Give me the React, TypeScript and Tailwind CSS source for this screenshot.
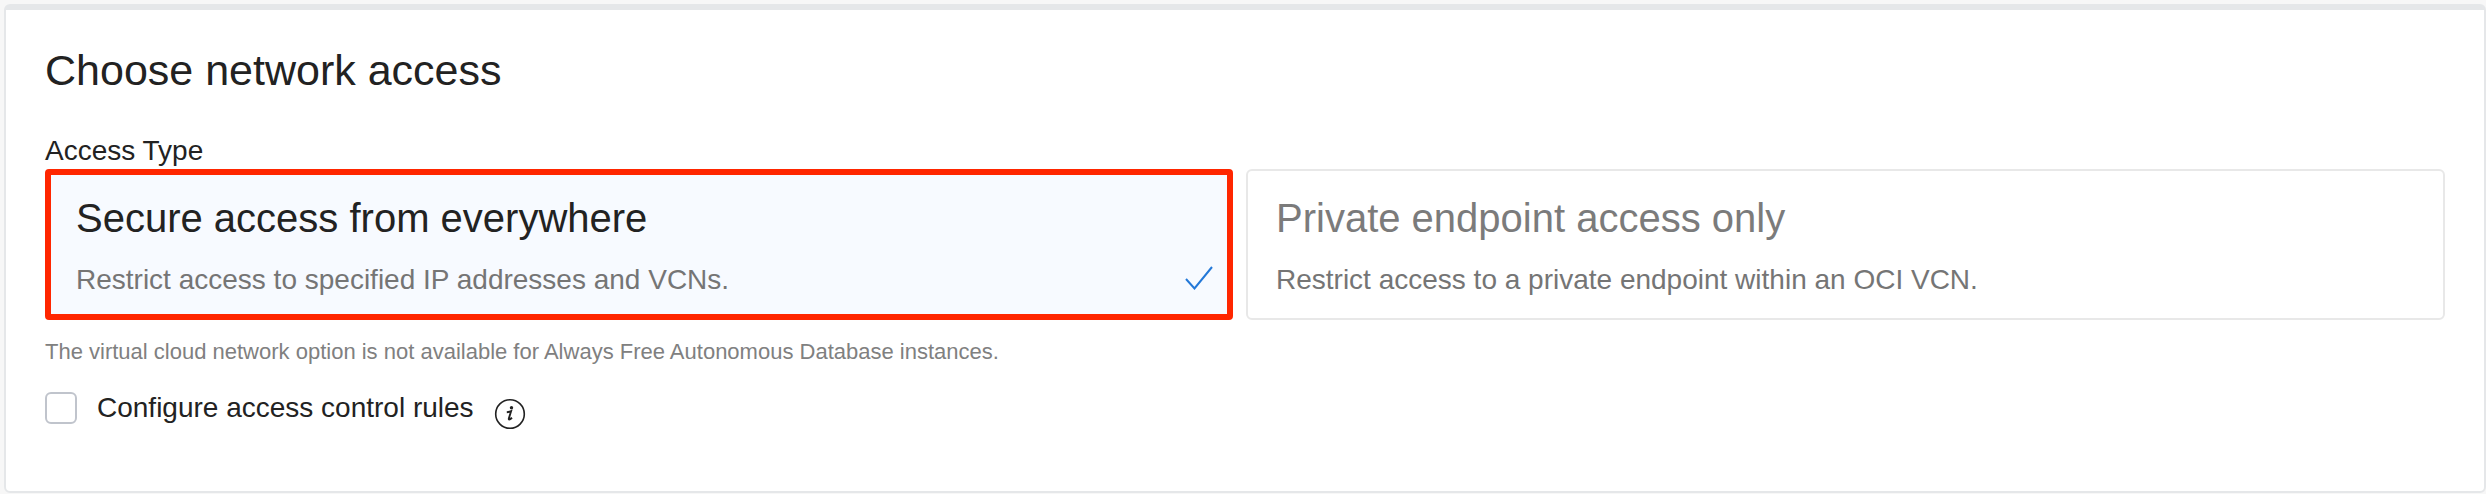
import { useState } from "react";

type Option = { id: string; title: string; description: string };

const options: Option[] = [
  {
    id: "everywhere",
    title: "Secure access from everywhere",
    description: "Restrict access to specified IP addresses and VCNs.",
  },
  {
    id: "private",
    title: "Private endpoint access only",
    description: "Restrict access to a private endpoint within an OCI VCN.",
  },
];

function CheckMark() {
  return (
    <svg viewBox="0 0 28 24" className="h-6 w-7 shrink-0" fill="none" stroke="#2378d8" strokeWidth="2" aria-hidden="true">
      <path d="M1 13 L9.500 22.500 L27 1" />
    </svg>
  );
}

function InfoIcon() {
  return (
    <svg viewBox="0 0 32 32" className="h-8 w-8" aria-hidden="true">
      <circle cx="16" cy="16" r="14.300" fill="none" stroke="#222" strokeWidth="1.600" />
      <circle cx="17.500" cy="9.700" r="1.700" fill="#222" />
      <path
        d="M12.800 14.300 C14.300 14.200 15.600 13.800 17.100 13.200 L14.900 20.300 C14.500 21.800 15.300 22.300 18 19.800"
        fill="none"
        stroke="#222"
        strokeWidth="1.900"
        strokeLinejoin="miter"
      />
    </svg>
  );
}

function AccessCard({ option, selected, onSelect }: { option: Option; selected: boolean; onSelect: () => void }) {
  return (
    <label
      className={
        selected
          ? "flex cursor-pointer items-end justify-between rounded-sm border-[6px] border-[#ff2600] bg-[#f7faff] pt-[19px] pr-[14px] pb-4 pl-[25px]"
          : "flex cursor-pointer items-end justify-between rounded-md border-2 border-[#e8e8e8] bg-white px-7 pt-[23px] pb-5"
      }
    >
      <input type="radio" name="access-type" className="sr-only" checked={selected} onChange={onSelect} />
      <span className="flex flex-col gap-5">
        <span className={selected ? "text-[40px] leading-[48px] text-[#222]" : "text-[40px] leading-[48px] text-[#7b7b7b]"}>
          {option.title}
        </span>
        <span className="text-[28px] leading-9 text-[#757575]">{option.description}</span>
      </span>
      {selected && (
        <span className="pb-2">
          <CheckMark />
        </span>
      )}
    </label>
  );
}

export default function App() {
  const [access, setAccess] = useState("everywhere");
  const [rules, setRules] = useState(false);

  return (
    <main className="min-h-screen bg-[#f7f7f7] pt-1 pb-[1px] pl-1 font-['Liberation_Sans',Arial,sans-serif] text-[#222]">
      <section className="rounded-md border-2 border-t-[6px] border-[#e5e7e9] bg-white px-[39px] pt-[35px] pb-[61px]">
        <h2 className="text-[43px] leading-[50px]">Choose network access</h2>
        <fieldset className="mt-[38px]">
          <legend className="text-[28px] leading-9">Access Type</legend>
          <div className="grid grid-cols-[1188fr_1199fr] gap-[13px]">
            {options.map((option) => (
              <AccessCard
                key={option.id}
                option={option}
                selected={access === option.id}
                onSelect={() => setAccess(option.id)}
              />
            ))}
          </div>
        </fieldset>
        <p className="mt-4 text-[22px] leading-8 text-[#808080]">
          The virtual cloud network option is not available for Always Free Autonomous Database instances.
        </p>
        <div className="mt-[18px] flex items-center">
          <input
            id="rules"
            type="checkbox"
            checked={rules}
            onChange={(event) => setRules(event.target.checked)}
            className="h-8 w-8 appearance-none rounded-md border-2 border-[#c0c4cc] bg-white checked:bg-[#2378d8]"
          />
          <label htmlFor="rules" className="ml-5 text-[28px] leading-9">
            Configure access control rules
          </label>
          <button type="button" aria-label="More information" className="ml-5 pt-3">
            <InfoIcon />
          </button>
        </div>
      </section>
    </main>
  );
}
